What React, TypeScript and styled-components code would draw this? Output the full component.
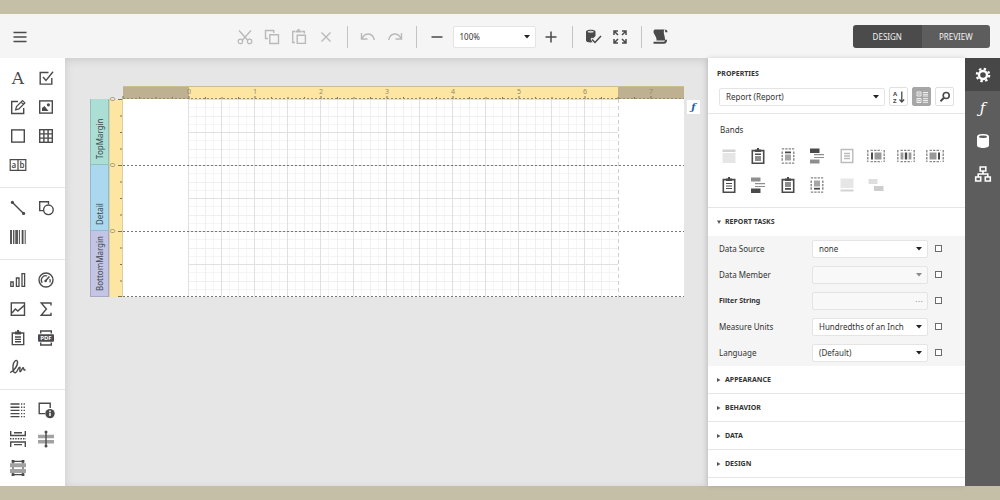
import React from "react";
import styled, { createGlobalStyle, css } from "styled-components";

const color = {
  frame: "#c6bfa8",
  bar: "#f5f5f5",
  ink: "#4a4a4a",
  text: "#333333",
  muted: "#b9b9b9",
  line: "#e6e6e6",
  rail: "#5d5d5d",
  railActive: "#474747",
  paperRuler: "#fde5a2",
  marginRuler: "#bdb192",
};

const GlobalStyle = createGlobalStyle`
  *, *::before, *::after { box-sizing: border-box; }
  body {
    margin: 0;
    background: ${color.frame};
    font-family: "Noto Sans", "Open Sans", sans-serif;
    font-size: 8px;
    line-height: 12px;
    color: ${color.text};
  }
  button, select, input { font: inherit; color: inherit; }
`;

/* ---------- shell ---------- */

const Page = styled.div`
  min-height: 100vh;
  display: flex;
  flex-direction: column;
  padding: 14px 0;
`;

const Workspace = styled.div`
  flex: 1;
  display: flex;
  align-items: stretch;
`;

const Svg = styled.svg`
  display: block;
  flex: none;
  overflow: visible;
`;

type IconProps = { size?: number; children: React.ReactNode };
const Icon = ({ size = 18, children }: IconProps) => (
  <Svg
    width={size}
    height={size}
    viewBox={`0 0 ${size} ${size}`}
    fill="none"
    stroke="currentColor"
    strokeWidth="1.4"
    aria-hidden="true"
  >
    {children}
  </Svg>
);

/* ---------- top toolbar ---------- */

const Toolbar = styled.header`
  display: flex;
  align-items: center;
  height: 44px;
  padding: 1px 10px 0 0;
  background: ${color.bar};
`;

const ToolGroup = styled.div`
  flex: 1;
  display: flex;
  align-items: center;
  justify-content: center;
  padding-left: 14px;
`;

const IconButton = styled.button<{ $dim?: boolean }>`
  display: flex;
  align-items: center;
  justify-content: center;
  width: 27px;
  height: 27px;
  padding: 0;
  border: 0;
  background: none;
  color: ${(p) => (p.$dim ? color.muted : color.ink)};
`;

const MenuButton = styled(IconButton)`
  width: 40px;
`;

const Divider = styled.span`
  width: 1px;
  height: 22px;
  margin: 0 7px;
  background: #c4c4c4;
`;

const ModeSwitch = styled.div`
  display: flex;
  width: 137px;
  height: 23px;
  border-radius: 3px;
  overflow: hidden;
`;

const ModeButton = styled.button<{ $active?: boolean }>`
  flex: 1;
  padding: 0;
  border: 0;
  background: ${(p) => (p.$active ? "#4b4b4b" : "#5d5d5d")};
  color: #f2f2f2;
`;

/* ---------- fields ---------- */

const Field = styled.span<{ $width?: number; $tall?: boolean; $disabled?: boolean }>`
  position: relative;
  display: flex;
  flex: ${(p) => (p.$width ? "none" : 1)};
  min-width: 0;
  width: ${(p) => (p.$width ? `${p.$width}px` : "auto")};
  height: ${(p) => (p.$tall ? 22 : 18)}px;
  margin: 0 ${(p) => (p.$tall ? 2 : 0)}px;
  border: 1px solid #e4e4e4;
  border-radius: 2px;
  background: ${(p) => (p.$disabled ? "#f8f8f8" : "#ffffff")};
  color: ${(p) => (p.$disabled ? "#8a8a8a" : color.text)};
`;

const control = css`
  flex: 1;
  min-width: 0;
  height: 100%;
  padding: 0 16px 0 6px;
  border: 0;
  outline: 0;
  background: none;
  opacity: 1;
`;

const Select = styled.select`
  ${control}
  appearance: none;
`;

const TextInput = styled.input`
  ${control}
`;

const Caret = styled.svg`
  position: absolute;
  right: 5px;
  top: 50%;
  margin-top: -2px;
  pointer-events: none;
`;

const MoreButton = styled.button`
  flex: none;
  width: 16px;
  padding: 0;
  border: 0;
  background: none;
  line-height: 8px;
`;

type DropProps = {
  id: string;
  label?: string;
  value: string;
  width?: number;
  tall?: boolean;
  disabled?: boolean;
};
const DropDown = ({ id, label, value, width, tall, disabled }: DropProps) => (
  <Field $width={width} $tall={tall} $disabled={disabled}>
    <Select id={id} aria-label={label} disabled={disabled}>
      <option>{value}</option>
    </Select>
    <Caret width="6" height="4" viewBox="0 0 6 4">
      <path d="M0 0h6L3 3.6z" fill={disabled ? "#8a8a8a" : "#222"} />
    </Caret>
  </Field>
);

/* ---------- toolbox ---------- */

const Toolbox = styled.nav`
  width: 65px;
  flex: none;
  background: #fff;
`;

const ToolSection = styled.div`
  display: grid;
  grid-template-columns: 28px 28px;
  grid-auto-rows: 29px;
  padding: 5px 4px 8px;
  border-bottom: 1px solid ${color.line};
  &:last-child {
    border-bottom: 0;
    padding-bottom: 0;
  }
`;

const ToolButton = styled(IconButton)`
  width: 28px;
  height: 29px;
`;

const LetterTool = styled.span`
  font: 17px/20px "DejaVu Serif", serif;
`;

const TOOLS: { name: string; icon: React.ReactNode }[][] = [
  [
    { name: "Label", icon: <LetterTool>A</LetterTool> },
    {
      name: "Check Box",
      icon: <Icon><path d="M11.5 3.5H3.2v11.6h11.6V9M6 8l3 3.4 7-8.6" /></Icon>,
    },
    {
      name: "Rich Text",
      icon: (
        <Icon>
          <path d="M9 3.5H2.7v12h12V10" />
          <path d="M6.6 11.8l.9-3.3 6-6 2.4 2.4-6 6zM12 4l2.3 2.3" strokeWidth="1.2" />
        </Icon>
      ),
    },
    {
      name: "Picture Box",
      icon: (
        <Icon>
          <rect x="2.7" y="2.9" width="12.6" height="12.2" />
          <path d="M5 13V10l2.5-2 4 5z" fill="currentColor" stroke="none" />
          <circle cx="11.4" cy="6.8" r="1.6" fill="currentColor" stroke="none" />
        </Icon>
      ),
    },
    { name: "Panel", icon: <Icon><rect x="2.7" y="2.9" width="12.6" height="12.2" /></Icon> },
    {
      name: "Table",
      icon: (
        <Icon>
          <rect x="2.7" y="2.7" width="12.6" height="12.6" />
          <path d="M6.9 3v12M11.1 3v12M3 6.9h12M3 11.1h12" />
        </Icon>
      ),
    },
    {
      name: "Character Comb",
      icon: (
        <Icon>
          <path d="M1.2 3.7h15.6v10.6H1.2zM9 3.7v10.6" strokeWidth="1.2" />
          <text x="2.6" y="11.6" fontSize="8" fontWeight="600" fill="currentColor" stroke="none">a</text>
          <text x="10.4" y="11.6" fontSize="8" fontWeight="600" fill="currentColor" stroke="none">b</text>
        </Icon>
      ),
    },
  ],
  [
    {
      name: "Line",
      icon: (
        <Icon>
          <path d="M3.5 3.5l11 11" />
          <circle cx="3.4" cy="3.4" r="1.6" fill="currentColor" stroke="none" />
          <circle cx="14.6" cy="14.4" r="1.6" fill="currentColor" stroke="none" />
        </Icon>
      ),
    },
    {
      name: "Shape",
      icon: (
        <Icon>
          <path d="M6 11.6H2.7V2.7h8.8v2.6" />
          <circle cx="11.4" cy="10.8" r="4.8" />
        </Icon>
      ),
    },
    {
      name: "Barcode",
      icon: (
        <Icon>
          <path d="M2 2v14M8 2v14M13.6 2v14" strokeWidth="1.8" />
          <path d="M4.6 2v14M6.2 2v14M10.4 2v14M16.2 2v14" strokeWidth="1" />
        </Icon>
      ),
    },
  ],
  [
    {
      name: "Chart",
      icon: <Icon><path d="M1.8 11h2.4v4.4H1.8zM7.4 7h2.6v8.4H7.4zM13 2.7h2.6v12.7H13z" strokeWidth="1.3" /></Icon>,
    },
    {
      name: "Gauge",
      icon: (
        <Icon>
          <circle cx="9" cy="9" r="7" />
          <path d="M5.2 11.8a4.4 4.4 0 0 1 5-6.8M12.8 8a4.4 4.4 0 0 1 0 3.6" strokeWidth="1.2" />
          <path d="M8.4 10l4-4.6" strokeWidth="1.5" />
          <circle cx="8.6" cy="10" r="1.3" fill="currentColor" stroke="none" />
        </Icon>
      ),
    },
    {
      name: "Sparkline",
      icon: (
        <Icon>
          <rect x="2.3" y="2.9" width="13.2" height="12.4" />
          <path d="M3 13l3.4-4 2.4 2L15 5.6" />
        </Icon>
      ),
    },
    { name: "Pivot Grid", icon: <Icon><path d="M14 5.4V3H4.2l5.2 6-5.2 6.2H14v-2.4" /></Icon> },
    {
      name: "Subreport",
      icon: (
        <Icon>
          <path d="M3.3 4h11.4v11.6H3.3zM6 8h6M6 10.4h6M6 12.8h6" strokeWidth="1.4" />
          <path d="M6 2.6h2V1h2v1.6h2v3H6z" fill="currentColor" stroke="none" />
        </Icon>
      ),
    },
    {
      name: "PDF Content",
      icon: (
        <Icon>
          <path d="M3.7 4.6V2h10.6v2.6M3.7 13.4V16h10.6v-2.6" />
          <rect x="1" y="5.2" width="16" height="7.6" rx="1" fill="currentColor" stroke="none" />
          <text x="3.2" y="11.3" fontSize="6" fontWeight="700" fill="#fff" stroke="none">PDF</text>
        </Icon>
      ),
    },
    {
      name: "Signature",
      icon: (
        <Icon>
          <path d="M1.2 14.6C5 13 9.4 7 8.4 3.4 7.6 1 4.4 3 4 8c-.4 4.4 .8 7.4 2.6 6.6 2-.8 2.6-5.4 4-5.4 1.2 0-.6 4.4 .6 4.6 1.2 .2 1.8-4.2 3-4 .9 .2 .2 2 1 2.2h1.4" />
        </Icon>
      ),
    },
  ],
  [
    {
      name: "Table of Contents",
      icon: (
        <Icon>
          <path d="M1.5 3h9M1.5 6.2h9M1.5 9.4h9M1.5 12.6h9M1.5 15.6h9" />
          <path d="M12 3h4.5M12 6.2h4.5M12 9.4h4.5M12 12.6h4.5M12 15.6h4.5" strokeDasharray="1.3 1.3" />
        </Icon>
      ),
    },
    {
      name: "Page Info",
      icon: (
        <Icon>
          <path d="M8 12.6H2.2V2.2h11V7" />
          <circle cx="13" cy="12.6" r="4.7" fill="currentColor" stroke="none" />
          <path d="M13 11.8v3.2M13 9.6v1.3" stroke="#fff" strokeWidth="1.5" />
        </Icon>
      ),
    },
    {
      name: "Page Break",
      icon: (
        <Icon>
          <path d="M1.7 1v4.5h14.6V1M5 2.8h8M1.7 17v-5h14.6v5M5 14.6h8" />
          <path d="M1 8.8h16" strokeDasharray="1.5 1.1" />
        </Icon>
      ),
    },
    {
      name: "Cross-band Line",
      icon: (
        <Icon>
          <path d="M1 6.5h16M1 11.7h16" stroke="#a2a2a2" strokeWidth="3.4" />
          <path d="M9 2v14" />
          <circle cx="9" cy="2" r="1.5" fill="currentColor" stroke="none" />
          <circle cx="9" cy="16" r="1.5" fill="currentColor" stroke="none" />
        </Icon>
      ),
    },
    {
      name: "Cross-band Box",
      icon: (
        <Icon>
          <path d="M4 2.4h10v13.2H4z" strokeWidth="1.2" />
          <path d="M1 6.3h16M1 11.9h16" stroke="#a2a2a2" strokeWidth="4" />
          <path d="M2.6 1h2.8v2.8H2.6zM12.6 1h2.8v2.8h-2.8zM2.6 14.2h2.8V17H2.6zM12.6 14.2h2.8V17h-2.8z" fill="currentColor" stroke="none" />
        </Icon>
      ),
    },
  ],
];

/* ---------- design surface ---------- */

const Surface = styled.main`
  flex: 1;
  min-width: 0;
  padding: 28px 0 28px 25px;
  background: #e6e6e6;
  box-shadow: inset 0 2px 9px rgba(0, 0, 0, 0.12);
  overflow: hidden;
`;

const Report = styled.div`
  display: grid;
  grid-template-columns: 19px 14px 561px 16px;
  grid-template-rows: 13px auto;
`;

const RulerSlot = styled.div`
  grid-column: 3;
`;

const BandColumn = styled.div`
  grid-column: 1;
`;

const Band = styled.div<{ $tint: string }>`
  width: 19px;
  height: 66px;
  padding-top: 5px;
  background: ${(p) => p.$tint};
  border: 1px solid rgba(0, 0, 0, 0.14);
  border-bottom: 0;
  writing-mode: vertical-rl;
  transform: rotate(180deg);
  line-height: 17px;
  color: #3d4a4c;
`;

const Paper = styled.div`
  background: #fff;
`;

const ExpressionButton = styled.button`
  width: 13px;
  height: 14px;
  margin: 1px 0 0 3px;
  padding: 0;
  border: 0;
  background: #fff;
  color: #1f5f9e;
  font: italic bold 10px/12px "DejaVu Serif", serif;
`;

const INCH = 66;
const PAPER_W = 561;
const MARGIN = 66;
const BODY_W = 429;

const TopRuler = () => (
  <Svg width={PAPER_W} height="13" viewBox={`0 0 ${PAPER_W} 13`}>
    <rect width={PAPER_W} height="13" fill={color.marginRuler} />
    <rect x={MARGIN} width={BODY_W} height="13" fill={color.paperRuler} />
    {Array.from({ length: 33 }, (_, i) => {
      const x = i * (INCH / 4);
      const whole = i % 4 === 0;
      return <path key={i} d={`M${x} ${whole ? 10 : 11}V13`} stroke="#7d745a" />;
    })}
    {Array.from({ length: 8 }, (_, i) => (
      <text key={i} x={MARGIN + i * INCH} y="8" fontSize="7" textAnchor="middle" fill="#92896b">
        {i}
      </text>
    ))}
    <path d={`M0 .5H${PAPER_W}`} stroke="#cbbd8e" />
    <path d={`M0 12.5H${PAPER_W}`} stroke="#978c6c" strokeDasharray="2 2" />
  </Svg>
);

const SideRuler = () => (
  <Svg width="14" height="198" viewBox="0 0 14 198">
    <rect width="14" height="198" fill={color.paperRuler} />
    <path d="M.5 0V198M13.5 0V198" stroke="#d9cfa6" />
    {Array.from({ length: 13 }, (_, i) => (
      <path key={i} d={`M${i % 4 ? 11 : 9} ${Math.min(i * 16.5 + 0.5, 197.5)}H13`} stroke="#7d745a" />
    ))}
    {[0, 66, 132].map((y) => (
      <text
        key={y}
        transform={`translate(6 ${y}) rotate(-90)`}
        fontSize="7"
        textAnchor="middle"
        fill="#92896b"
      >
        0
      </text>
    ))}
  </Svg>
);

const gridShade = (i: number) => (i % 4 === 0 ? "#e0e0e0" : i % 2 === 0 ? "#efefef" : "#f5f5f5");

const DesignGrid = () => (
  <Svg width={PAPER_W} height="198" viewBox={`0 0 ${PAPER_W} 198`}>
    {[3, 1, 2, 0].map((phase) => (
      <g key={phase} stroke={gridShade(phase)}>
        {Array.from({ length: 13 }, (_, n) => {
          const x = Math.round(MARGIN + (n * 4 + phase) * 8.25) - 0.5;
          return <path key={n} d={`M${x} 0V198`} />;
        })}
        {Array.from({ length: 6 }, (_, n) => {
          const y = Math.round((n * 4 + phase) * 8.25) + 0.5;
          return <path key={n} d={`M${MARGIN} ${y}H${MARGIN + BODY_W}`} />;
        })}
      </g>
    ))}
    <path d={`M${MARGIN + BODY_W + 0.5} 0V198`} stroke="#cfcfcf" strokeDasharray="4 3" />
    {[66.5, 132.5, 197.5].map((y) => (
      <path key={y} d={`M0 ${y}H${PAPER_W}`} stroke="#777" strokeDasharray="2 2" />
    ))}
  </Svg>
);

/* ---------- properties panel ---------- */

const Panel = styled.aside`
  width: 257px;
  flex: none;
  background: #fff;
  box-shadow: 0 0 5px rgba(0, 0, 0, 0.15);
`;

const PanelHead = styled.div`
  padding: 10px 11px 7px;
  border-bottom: 1px solid ${color.line};
`;

const PanelTitle = styled.h2`
  margin: 0 0 7px -2px;
  font-size: 7px;
  line-height: 12px;
  font-weight: 700;
`;

const PickerRow = styled.div`
  display: flex;
  align-items: center;
  gap: 4px;
`;

const SquareButton = styled.button<{ $active?: boolean }>`
  display: flex;
  align-items: center;
  justify-content: center;
  width: 19px;
  height: 19px;
  padding: 0;
  border: 1px solid ${(p) => (p.$active ? "#a6a6a6" : "#e0e0e0")};
  border-radius: 2px;
  background: ${(p) => (p.$active ? "#a6a6a6" : "#fff")};
  color: ${(p) => (p.$active ? "#f0f0f0" : color.ink)};
`;

const BandsBlock = styled.section`
  padding: 10px 15px 8px 6px;
  border-bottom: 1px solid ${color.line};
`;

const BandsTitle = styled.h3`
  margin: 0 0 5px 6px;
  font-size: 8px;
  line-height: 12px;
  font-weight: 400;
`;

const BandsGrid = styled.div`
  display: grid;
  grid-template-columns: repeat(8, 1fr);
  grid-auto-rows: 29px;
`;

const BandButton = styled(IconButton)`
  width: 100%;
  height: 29px;
`;

const SectionButton = styled.button<{ $ruled?: boolean }>`
  display: flex;
  align-items: center;
  gap: 4px;
  width: 100%;
  height: 28px;
  padding: 0 9px;
  border: 0;
  border-bottom: 1px solid ${(p) => (p.$ruled ? color.line : "transparent")};
  background: #fff;
  font-size: 7px;
  font-weight: 700;
`;

const Tasks = styled.div`
  background: ${color.bar};
`;

const TaskRow = styled.div`
  display: flex;
  align-items: center;
  height: 26px;
  padding: 0 23px 0 11px;
`;

const TaskLabel = styled.label<{ $strong?: boolean }>`
  flex: none;
  width: 93px;
  font-size: ${(p) => (p.$strong ? 7 : 8)}px;
  font-weight: ${(p) => (p.$strong ? 700 : 400)};
`;

const ResetMark = styled.input`
  appearance: none;
  flex: none;
  width: 7px;
  height: 7px;
  margin: 0 0 2px 7px;
  border: 1px solid #6c6c6c;
  background: #fff;
`;

const g1 = "#8e8e8e";
const dottedWide = (
  <path d="M3.5 3.4h11M3.5 14.6h11M.8 3v12M17.2 3v12" stroke="#8a8a8a" strokeWidth="1.4" strokeDasharray="2.4 1.1" />
);
const clip = (
  <>
    <path d="M3.3 3.6h11.4v12.6H3.3z" strokeWidth="1.6" />
    <path d="M6 2.6h2V1h2v1.6h2V5H6z" fill="currentColor" stroke="none" />
  </>
);
const block = (d: string, fill: string) => <path d={d} fill={fill} stroke="none" />;
const columnBand = (
  <path
    d="M2.8 1.9h12.4M2.8 16.1h12.4M3.2 4.5v10M14.8 4.5v10"
    stroke="#858585"
    strokeWidth="1.4"
    strokeDasharray="2.4 1"
  />
);

const BANDS: { name: string; icon: React.ReactNode }[] = [
  {
    name: "Top Margin",
    icon: <Icon>{block("M2.5 2.5h13v2.5h-13z", "#d2d2d2")}{block("M2.5 6h13v10h-13z", "#e6e6e6")}</Icon>,
  },
  { name: "Report Header", icon: <Icon>{clip}{block("M6 9h6v5H6z", g1)}{block("M6 6.5h6v1.5H6z", color.ink)}</Icon> },
  {
    name: "Page Header",
    icon: <Icon>{columnBand}{block("M6 4.5h6v1.8H6z", color.ink)}{block("M6 7.5h6v6H6z", "#a6a6a6")}</Icon>,
  },
  {
    name: "Group Header",
    icon: (
      <Icon>
        {block("M2 1.5h9.5v4.5H2z", color.ink)}
        {block("M2 12.5h9.5v4H2z", g1)}
        <path d="M6 7.7h10M6 10.5h10" stroke={g1} strokeWidth="1.2" />
      </Icon>
    ),
  },
  {
    name: "Detail",
    icon: (
      <Icon>
        <path d="M3.2 2.5h11.6v13H3.2zM6 6.5h6M6 9h6M6 11.5h6" stroke="#bcbcbc" />
      </Icon>
    ),
  },
  {
    name: "Vertical Header",
    icon: <Icon>{dottedWide}{block("M4 5.5h2v7H4z", color.ink)}{block("M7.5 5.5h7v7h-7z", "#999")}</Icon>,
  },
  {
    name: "Vertical Detail",
    icon: <Icon>{dottedWide}{block("M7.8 5.5h2.4v7H7.8z", color.ink)}{block("M3.6 5.5h2.8v7H3.6zM11.6 5.5h2.8v7h-2.8z", "#999")}</Icon>,
  },
  {
    name: "Vertical Total",
    icon: <Icon>{dottedWide}{block("M12 5.5h2v7h-2z", color.ink)}{block("M3.5 5.5h7v7h-7z", "#999")}</Icon>,
  },
  {
    name: "Detail Report",
    icon: (
      <Icon>
        {clip}
        <path d="M6 7.5h6M6 10h6M6 12.5h6" strokeWidth="1.2" />
      </Icon>
    ),
  },
  {
    name: "Group Footer",
    icon: (
      <Icon>
        {block("M2 1.5h9.5v4H2z", g1)}
        {block("M2 12.5h9.5v4.5H2z", color.ink)}
        <path d="M6 7.7h10M6 10.5h10" stroke={g1} strokeWidth="1.2" />
      </Icon>
    ),
  },
  { name: "Report Footer", icon: <Icon>{clip}{block("M6 6h6v5H6z", g1)}{block("M6 12h6v1.8H6z", color.ink)}</Icon> },
  {
    name: "Page Footer",
    icon: <Icon>{columnBand}{block("M6 4.5h6v6H6z", "#a6a6a6")}{block("M6 11.8h6v1.8H6z", color.ink)}</Icon>,
  },
  {
    name: "Bottom Margin",
    icon: <Icon>{block("M2.5 2.5h13v9.5h-13z", "#e6e6e6")}{block("M2.5 13.5h13v2h-13z", "#d2d2d2")}</Icon>,
  },
  {
    name: "Sub-Band",
    icon: <Icon>{block("M1.5 3h9v5h-9z", "#dedede")}{block("M7 10h9.5v5H7z", "#cdcdcd")}</Icon>,
  },
];

/* ---------- right rail ---------- */

const Rail = styled.nav`
  width: 35px;
  flex: none;
  background: ${color.rail};
`;

const RailButton = styled(IconButton)<{ $active?: boolean }>`
  width: 100%;
  height: 33px;
  color: #fff;
  background: ${(p) => (p.$active ? color.railActive : "none")};
`;

const RailGlyph = styled.span`
  font: italic 15px/20px "DejaVu Serif", serif;
`;

const Expander = ({ open }: { open?: boolean }) => (
  <Svg width="4" height="4" viewBox="0 0 4 4">
    <path d={open ? "M0 .5h4L2 4z" : "M0 0v4l3.5-2z"} fill="#555" />
  </Svg>
);

export default function App() {
  return (
    <>
      <GlobalStyle />
      <Page>
        <Toolbar>
          <MenuButton aria-label="Menu">
            <Icon><path d="M2.5 4.5h13M2.5 9h13M2.5 13.5h13" /></Icon>
          </MenuButton>
          <ToolGroup>
            <IconButton $dim aria-label="Cut">
              <Icon>
                <path d="M3 2.5l9 10M15 2.5l-9 10" />
                <circle cx="4.4" cy="13.4" r="2.2" strokeWidth="1.2" />
                <circle cx="13.6" cy="13.4" r="2.2" strokeWidth="1.2" />
              </Icon>
            </IconButton>
            <IconButton $dim aria-label="Copy">
              <Icon><path d="M5 10.5H2.5v-8h8.2V5M6.8 6.8h8.7v8.7H6.8z" /></Icon>
            </IconButton>
            <IconButton $dim aria-label="Paste">
              <Icon>
                <path d="M5 14.5H2.7v-11H5M12 3.5h2.4V5.5M7.2 7.2h8.2v8.2H7.2z" />
                <path d="M5.5 4.5v-2H7.5v-1.5h2v1.5h2v2z" fill="currentColor" stroke="none" />
              </Icon>
            </IconButton>
            <IconButton $dim aria-label="Delete">
              <Icon><path d="M4.5 4.5l9 9M13.5 4.5l-9 9" /></Icon>
            </IconButton>
            <Divider />
            <IconButton $dim aria-label="Undo">
              <Icon><path d="M2.5 5v6H8.5M2.7 10.8C6 4.5 13.5 4 15.3 12" /></Icon>
            </IconButton>
            <IconButton $dim aria-label="Redo">
              <Icon><path d="M15.5 5v6H9.5M15.3 10.8C12 4.5 4.5 4 2.7 12" /></Icon>
            </IconButton>
            <Divider />
            <IconButton aria-label="Zoom out">
              <Icon><path d="M3.5 9h11" strokeWidth="1.5" /></Icon>
            </IconButton>
            <DropDown id="zoom" label="Zoom" value="100%" width={83} tall />
            <IconButton aria-label="Zoom in">
              <Icon><path d="M3.5 9h11M9 3.5v11" strokeWidth="1.5" /></Icon>
            </IconButton>
            <Divider />
            <IconButton aria-label="Validate bindings">
              <Icon>
                <path d="M2 3.5C2 1 11.5 1 11.5 3.5V8L9 10.5 8 9.5 6.5 11l2 3.3C5 14.8 2 14 2 12.5z" fill="currentColor" stroke="none" />
                <ellipse cx="6.7" cy="3.7" rx="3.2" ry="1" fill="#d5d5d5" stroke="none" />
                <path d="M8 11.5l3 3 6-6.5" strokeWidth="1.5" />
              </Icon>
            </IconButton>
            <IconButton aria-label="Full screen">
              <Icon>
                <path d="M3 7V3H7M3 3l4 4M11 3h4V7M15 3l-4 4M3 11v4H7M3 15l4-4M15 11v4h-4M15 15l-4-4" strokeWidth="1.5" />
              </Icon>
            </IconButton>
            <Divider />
            <IconButton aria-label="Scripts">
              <Icon>
                <path d="M2 1.5h9.5c-2 3 1 7 .5 11H3.5C4 9 1 7 .5 4c0-1.5.5-2.5 1.5-2.5z" fill="currentColor" stroke="none" />
                <path d="M12 1.5c1.5 0 2.5 1 2.5 2.8h-2.3z" fill="currentColor" stroke="none" />
                <path d="M.5 14.8h10.5c1 0 2-1 2-3" strokeWidth="2" />
              </Icon>
            </IconButton>
          </ToolGroup>
          <ModeSwitch>
            <ModeButton $active>DESIGN</ModeButton>
            <ModeButton>PREVIEW</ModeButton>
          </ModeSwitch>
        </Toolbar>

        <Workspace>
          <Toolbox aria-label="Toolbox">
            {TOOLS.map((section, i) => (
              <ToolSection key={i}>
                {section.map((tool) => (
                  <ToolButton key={tool.name} aria-label={tool.name}>
                    {tool.icon}
                  </ToolButton>
                ))}
              </ToolSection>
            ))}
          </Toolbox>

          <Surface>
            <Report>
              <RulerSlot><TopRuler /></RulerSlot>
              <BandColumn>
                <Band $tint="#abdfd6">TopMargin</Band>
                <Band $tint="#abd8ef">Detail</Band>
                <Band $tint="#c3c4e6">BottomMargin</Band>
              </BandColumn>
              <SideRuler />
              <Paper><DesignGrid /></Paper>
              <ExpressionButton aria-label="Edit expressions">ƒ</ExpressionButton>
            </Report>
          </Surface>

          <Panel>
            <PanelHead>
              <PanelTitle>PROPERTIES</PanelTitle>
              <PickerRow>
                <DropDown id="element" label="Report element" value="Report (Report)" />
                <SquareButton aria-label="Sort alphabetically">
                  <Icon size={14}>
                    <text x="1" y="6" fontSize="6" fontWeight="700" fill="currentColor" stroke="none">A</text>
                    <text x="1" y="13" fontSize="6" fontWeight="700" fill="currentColor" stroke="none">Z</text>
                    <path d="M9.8 1.5v10M7.5 9.5l2.3 2.5 2.3-2.5" strokeWidth="1.3" />
                  </Icon>
                </SquareButton>
                <SquareButton $active aria-label="Group by category">
                  <Icon size={14}>
                    <path d="M2 2h4v4H2zM2 8.5h4v4H2zM8 2.5h5M8 4.3h5M8 6h5M8 8.7h5M8 10.5h5M8 12.3h5" strokeWidth="1" />
                    <path d="M3 4h2M3 10.5h2M4 9.5v2" strokeWidth="1" />
                  </Icon>
                </SquareButton>
                <SquareButton aria-label="Search">
                  <Icon size={14}>
                    <circle cx="8.2" cy="5.5" r="3" strokeWidth="1.6" />
                    <path d="M6 7.8l-3.5 3.5" strokeWidth="2" />
                  </Icon>
                </SquareButton>
              </PickerRow>
            </PanelHead>

            <BandsBlock>
              <BandsTitle>Bands</BandsTitle>
              <BandsGrid>
                {BANDS.map((band) => (
                  <BandButton key={band.name} aria-label={band.name}>
                    {band.icon}
                  </BandButton>
                ))}
              </BandsGrid>
            </BandsBlock>

            <SectionButton aria-expanded="true"><Expander open />REPORT TASKS</SectionButton>
            <Tasks>
              <TaskRow>
                <TaskLabel htmlFor="source">Data Source</TaskLabel>
                <DropDown id="source" value="none" />
                <ResetMark type="checkbox" aria-label="Data Source options" />
              </TaskRow>
              <TaskRow>
                <TaskLabel htmlFor="member">Data Member</TaskLabel>
                <DropDown id="member" value="" disabled />
                <ResetMark type="checkbox" aria-label="Data Member options" />
              </TaskRow>
              <TaskRow>
                <TaskLabel htmlFor="filter" $strong>Filter String</TaskLabel>
                <Field $disabled>
                  <TextInput id="filter" readOnly />
                  <MoreButton aria-label="Edit filter">⋯</MoreButton>
                </Field>
                <ResetMark type="checkbox" aria-label="Filter String options" />
              </TaskRow>
              <TaskRow>
                <TaskLabel htmlFor="units">Measure Units</TaskLabel>
                <DropDown id="units" value="Hundredths of an Inch" />
                <ResetMark type="checkbox" aria-label="Measure Units options" />
              </TaskRow>
              <TaskRow>
                <TaskLabel htmlFor="language">Language</TaskLabel>
                <DropDown id="language" value="(Default)" />
                <ResetMark type="checkbox" aria-label="Language options" />
              </TaskRow>
            </Tasks>
            {["APPEARANCE", "BEHAVIOR", "DATA", "DESIGN"].map((name) => (
              <SectionButton key={name} $ruled aria-expanded="false">
                <Expander />
                {name}
              </SectionButton>
            ))}
          </Panel>

          <Rail aria-label="Panels">
            <RailButton $active aria-label="Properties">
              <Icon>
                <circle cx="9" cy="9" r="4" strokeWidth="2.4" />
                <circle cx="9" cy="9" r="6.2" strokeWidth="2.2" strokeDasharray="2.43 2.439" />
              </Icon>
            </RailButton>
            <RailButton aria-label="Expressions"><RailGlyph>ƒ</RailGlyph></RailButton>
            <RailButton aria-label="Field list">
              <Icon>
                <path d="M3 4.5C3 1.2 15 1.2 15 4.5v9c0 3.3-12 3.3-12 0z" fill="currentColor" stroke="none" />
                <ellipse cx="9" cy="4.7" rx="4" ry="1.2" fill={color.rail} stroke="none" />
              </Icon>
            </RailButton>
            <RailButton aria-label="Report explorer">
              <Icon>
                <path d="M6.2 2h5.6v4H6.2zM1.7 12h5v4h-5zM11.3 12h5v4h-5zM9 6v3M4.2 12V9h9.6v3" strokeWidth="1.6" />
              </Icon>
            </RailButton>
          </Rail>
        </Workspace>
      </Page>
    </>
  );
}
